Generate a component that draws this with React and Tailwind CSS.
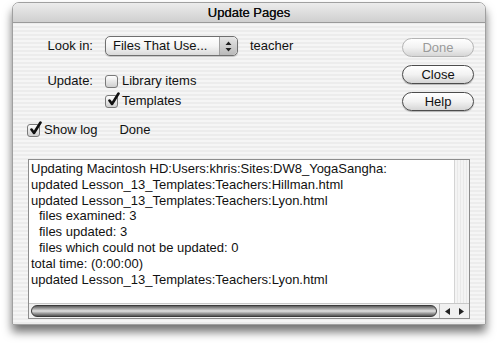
const font = { fontFamily: '"Liberation Sans", Arial, sans-serif' };

function Check({ checked }) {
  return (
    <span className="relative inline-block w-[13px] h-[13px] rounded-[3px] border border-[#7a7a7a] bg-gradient-to-b from-[#ffffff] to-[#cfcfcf] shrink-0">
      {checked && (
        <svg className="absolute left-[1px] top-[-4px]" width="14" height="15" viewBox="0 0 14 15">
          <path d="M2.5 8.5 L5 12 L11.5 1.5" fill="none" stroke="#111" strokeWidth="2.6" strokeLinecap="round" strokeLinejoin="round" />
        </svg>
      )}
    </span>
  );
}

function Button({ children, disabled }) {
  return (
    <div
      className={
        "h-[19px] w-[72px] rounded-full border flex items-center justify-center text-[13px] bg-gradient-to-b from-[#ffffff] via-[#f2f2f2] to-[#d6d6d6] " +
        (disabled ? "border-[#b4b4b4] text-[#9a9a9a]" : "border-[#4c4c4c] text-[#111] shadow-[0_1px_1px_rgba(0,0,0,0.25)]")
      }
    >
      {children}
    </div>
  );
}

const lines = [
  ["Updating Macintosh HD:Users:khris:Sites:DW8_YogaSangha:", false],
  ["updated Lesson_13_Templates:Teachers:Hillman.html", false],
  ["updated Lesson_13_Templates:Teachers:Lyon.html", false],
  ["files examined: 3", true],
  ["files updated: 3", true],
  ["files which could not be updated: 0", true],
  ["total time: (0:00:00)", false],
  ["updated Lesson_13_Templates:Teachers:Lyon.html", false],
];

export default function App() {
  return (
    <div className="w-[500px] h-[346px] bg-white pt-[2px] pl-[12px]" style={font}>
      <div className="w-[474px] h-[323px] rounded-t-[7px] shadow-[0_7px_10px_rgba(0,0,0,0.55)] flex flex-col overflow-hidden border border-[#a0a0a0]">
        <div className="h-[20px] shrink-0 bg-gradient-to-b from-[#ececec] to-[#cfcfcf] border-b border-[#9a9a9a] flex items-center justify-center text-[13px] text-[#111] [text-shadow:0_0_0.4px_#111]">
          Update Pages
        </div>
        <div className="flex-1 flex flex-col bg-[repeating-linear-gradient(0deg,#ececec_0px,#ececec_2px,#f5f5f5_2px,#f5f5f5_4px)] text-[13px] text-[#111]">
          <div className="flex">
            <div className="flex-1 flex flex-col pt-[13px]">
              <div className="flex items-center h-[20px]">
                <span className="w-[80px] text-right">Look in:</span>
                <div className="ml-[12px] w-[133px] h-[20px] rounded-[5px] border border-[#6f6f6f] bg-gradient-to-b from-[#ffffff] via-[#f4f4f4] to-[#dadada] flex items-center shadow-[0_1px_1px_rgba(0,0,0,0.2)]">
                  <span className="flex-1 pl-[7px]">Files That Use...</span>
                  <span className="w-[18px] h-full border-l border-[#a0a0a0] rounded-r-[5px] bg-gradient-to-b from-[#e6e6e6] to-[#b9b9b9] flex items-center justify-center">
                    <svg width="7" height="11" viewBox="0 0 7 11">
                      <path d="M3.5 0.5 L6.5 4 L0.5 4 Z M3.5 10.5 L6.5 7 L0.5 7 Z" fill="#222" />
                    </svg>
                  </span>
                </div>
                <span className="ml-[12px]">teacher</span>
              </div>
              <div className="flex items-center h-[16px] mt-[17px]">
                <span className="w-[80px] text-right">Update:</span>
                <span className="ml-[12px] flex items-center gap-[4px]">
                  <Check />
                  <span>Library items</span>
                </span>
              </div>
              <div className="flex items-center h-[16px] mt-[4px] pl-[92px] gap-[4px]">
                <Check checked />
                <span>Templates</span>
              </div>
              <div className="flex items-center h-[16px] mt-[13px] pl-[14px]">
                <Check checked />
                <span className="ml-[4px]">Show log</span>
                <span className="ml-[22px]">Done</span>
              </div>
            </div>
            <div className="flex flex-col gap-[8px] pt-[15px] pr-[11px]">
              <Button disabled>Done</Button>
              <Button>Close</Button>
              <Button>Help</Button>
            </div>
          </div>
          <div className="mx-[15px] mt-[21px] h-[160px] border border-[#8d8d8d] bg-white flex flex-col">
            <div className="flex-1 flex">
              <div className="flex-1 pl-[2px] pt-[1px] leading-[15.8px] text-[13px]">
                {lines.map(([t, indent], i) => (
                  <div key={i} className={indent ? "pl-[8px]" : ""}>{t}</div>
                ))}
              </div>
              <div className="w-[15px] bg-[repeating-linear-gradient(90deg,#f4f4f4_0px,#f4f4f4_2px,#e9e9e9_2px,#e9e9e9_3px)] border-l border-[#d4d4d4]" />
            </div>
            <div className="h-[15px] flex border-t border-[#c8c8c8] bg-[#f0f0f0]">
              <div className="flex-1 px-[2px] py-[1px]">
                <div className="h-full rounded-full border border-[#3a3a3a] bg-gradient-to-b from-[#5e5e5e] via-[#e2e2e2] to-[#555]" />
              </div>
              <div className="w-[30px] flex items-center justify-around border-l border-[#bbb]">
                <svg width="5" height="7" viewBox="0 0 5 7"><path d="M0 3.5 L5 0 L5 7 Z" fill="#222" /></svg>
                <svg width="5" height="7" viewBox="0 0 5 7"><path d="M5 3.5 L0 0 L0 7 Z" fill="#222" /></svg>
              </div>
            </div>
          </div>
        </div>
      </div>
    </div>
  );
}
